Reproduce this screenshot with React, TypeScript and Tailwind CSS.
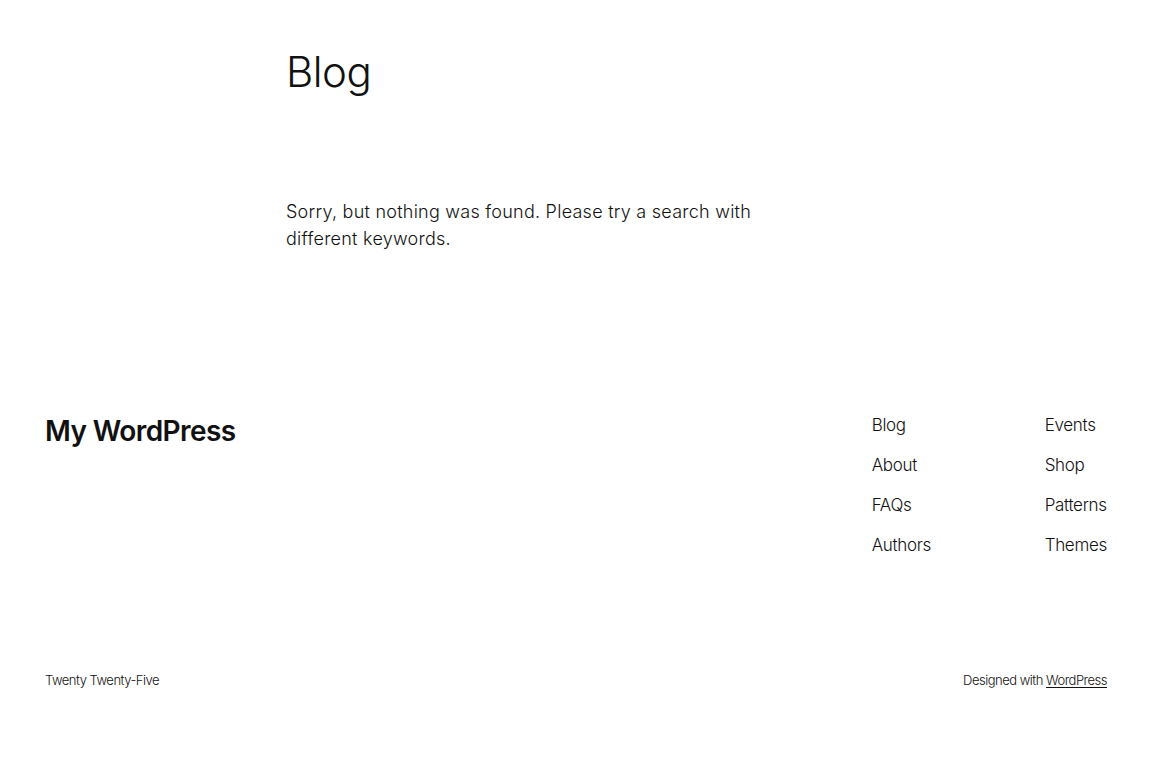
const navLeft = ['Blog', 'About', 'FAQs', 'Authors'];
const navRight = ['Events', 'Shop', 'Patterns', 'Themes'];

export default function App() {
  return (
    <div
      className="min-h-screen bg-white text-[#111111]"
      style={{ fontFamily: 'Inter, "Noto Sans", sans-serif' }}
    >
      {/* Main content */}
      <main className="px-[45px] pt-[47px]">
        <div className="mx-auto w-[580px]">
          <h1 className="text-[42px] font-light leading-[50px] tracking-[-0.5px]">Blog</h1>
          <p className="mt-[101px] max-w-[500px] text-[18px] font-light leading-[27px] tracking-[0.25px] text-[#111111]">
            Sorry, but nothing was found. Please try a search with different keywords.
          </p>
        </div>
      </main>

      {/* Footer */}
      <footer className="mt-[159px] px-[45px]">
        <div className="flex items-start justify-between">
          <a className="pt-[2px] text-[28px] font-semibold leading-[36px] tracking-[-0.6px]">My WordPress</a>
          <div className="flex gap-[115px] pt-[1px]">
            <ul className="flex w-[58px] flex-col gap-[13px]">
              {navLeft.map((item) => (
                <li key={item} className="text-[17px] font-light leading-[27px] tracking-[-0.3px] whitespace-nowrap">
                  {item}
                </li>
              ))}
            </ul>
            <ul className="flex flex-col gap-[13px]">
              {navRight.map((item) => (
                <li key={item} className="text-[17px] font-light leading-[27px] tracking-[-0.3px] whitespace-nowrap">
                  {item}
                </li>
              ))}
            </ul>
          </div>
        </div>
        <div className="mt-[111px] flex items-center justify-between text-[13px] font-light leading-[20px] tracking-[-0.5px]">
          <p>Twenty Twenty-Five</p>
          <p>
            Designed with <a className="underline underline-offset-2">WordPress</a>
          </p>
        </div>
      </footer>
    </div>
  );
}
